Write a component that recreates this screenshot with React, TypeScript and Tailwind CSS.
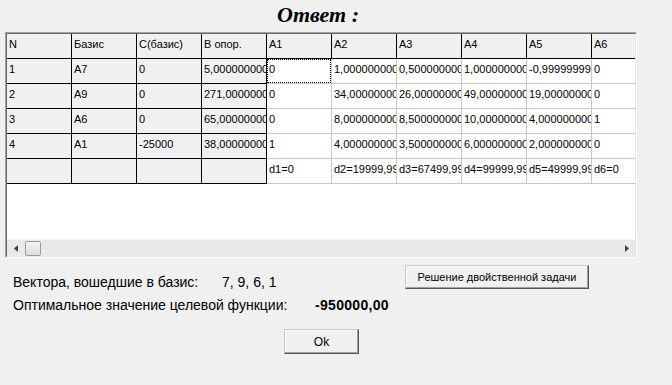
import React from 'react';

const header = ['N', 'Базис', 'C(базис)', 'B опор.', 'A1', 'A2', 'A3', 'A4', 'A5', 'A6'];

const rows: string[][] = [
  ['1', 'A7', '0', '5,00000000000000', '0', '1,00000000000000', '0,500000000000000', '1,00000000000000', '-0,999999999999999', '0'],
  ['2', 'A9', '0', '271,000000000000', '0', '34,0000000000000', '26,0000000000000', '49,0000000000000', '19,0000000000000', '0'],
  ['3', 'A6', '0', '65,0000000000000', '0', '8,00000000000000', '8,50000000000000', '10,0000000000000', '4,00000000000000', '1'],
  ['4', 'A1', '-25000', '38,0000000000000', '1', '4,00000000000000', '3,50000000000000', '6,00000000000000', '2,00000000000000', '0'],
  ['', '', '', '', 'd1=0', 'd2=19999,9999999999', 'd3=67499,9999999999', 'd4=99999,9999999999', 'd5=49999,9999999999', 'd6=0'],
];

function Cell({ text, fixed, focus }: { text: string; fixed: boolean; focus?: boolean }) {
  return (
    <div
      className={`relative w-[65px] h-[25px] shrink-0 border-r border-b overflow-hidden whitespace-nowrap pl-[2px] pt-[4px] text-[11px] leading-[13px] text-black ${
        fixed ? 'bg-[#f0f0f0] border-black' : 'bg-white border-[#c8c8c8]'
      }`}
    >
      {text}
      {focus && <div className="absolute inset-0 border border-dotted border-black" />}
    </div>
  );
}

function WinButton({ label, className }: { label: string; className: string }) {
  return (
    <div
      className={`flex items-center justify-center bg-[#f0f0f0] border border-t-[#c8c8c8] border-l-[#c8c8c8] border-r-[#555555] border-b-[#555555] shadow-[inset_-1px_-1px_0_#a0a0a0,inset_1px_1px_0_#ffffff] text-black ${className}`}
    >
      {label}
    </div>
  );
}

export default function App() {
  return (
    <div className="w-[672px] h-[385px] bg-[#f0f0f0] overflow-hidden font-['Liberation_Sans',Arial,sans-serif]">
      <div className="h-[32px] pl-[277px] pt-[4px] font-['Liberation_Serif','Times_New_Roman',serif] font-bold italic text-[22px] leading-[22px] text-black">
        Ответ :
      </div>

      {/* string grid */}
      <div className="ml-[5px] w-[632px] h-[226px] border border-t-[#a0a0a0] border-l-[#a0a0a0] border-r-white border-b-white">
        <div className="h-full border border-t-[#696969] border-l-[#696969] border-r-[#e3e3e3] border-b-[#e3e3e3] bg-white flex flex-col">
          <div className="flex-1 overflow-hidden">
            <div className="flex">
              {header.map((h) => (
                <Cell key={h} text={h} fixed />
              ))}
            </div>
            {rows.map((r, i) => (
              <div key={i} className="flex">
                {r.map((t, j) => (
                  <Cell key={j} text={t} fixed={j < 4} focus={i === 0 && j === 4} />
                ))}
              </div>
            ))}
          </div>
          <div className="h-[17px] flex items-center bg-[#e9e9e9] border-t border-[#f4f4f4]">
            <div className="w-[17px] h-full flex items-center justify-center">
              <svg width="4" height="7" viewBox="0 0 4 7">
                <path d="M4 0 L0 3.5 L4 7 Z" fill="#404040" />
              </svg>
            </div>
            <div className="ml-[1px] w-[16px] h-[15px] rounded-[2px] border border-[#9a9a9a] bg-gradient-to-b from-[#f4f4f4] to-[#dcdcdc]" />
            <div className="flex-1" />
            <div className="w-[17px] h-full flex items-center justify-center">
              <svg width="4" height="7" viewBox="0 0 4 7">
                <path d="M0 0 L4 3.5 L0 7 Z" fill="#404040" />
              </svg>
            </div>
          </div>
        </div>
      </div>

      <div className="flex items-start mt-[7px] h-[24px]">
        <div className="pl-[13px] w-[222px] pt-[9px] text-[14px] leading-[16px] text-black whitespace-nowrap">
          Вектора, вошедшие в базис:
        </div>
        <div className="w-[183px] pt-[9px] text-[14px] leading-[16px] text-black">7, 9, 6, 1</div>
        <WinButton label="Решение двойственной задачи" className="w-[184px] h-[24px] text-[11px]" />
      </div>

      <div className="flex items-baseline pt-[8px]">
        <div className="pl-[13px] w-[315px] text-[14px] leading-[16px] text-black whitespace-nowrap">
          Оптимальное значение целевой функции:
        </div>
        <div className="text-[14px] leading-[16px] font-bold text-black tracking-[0.3px]">-950000,00</div>
      </div>

      <div className="mt-[16px] ml-[284px]">
        <WinButton label="Ok" className="w-[75px] h-[25px] text-[12px]" />
      </div>
    </div>
  );
}
